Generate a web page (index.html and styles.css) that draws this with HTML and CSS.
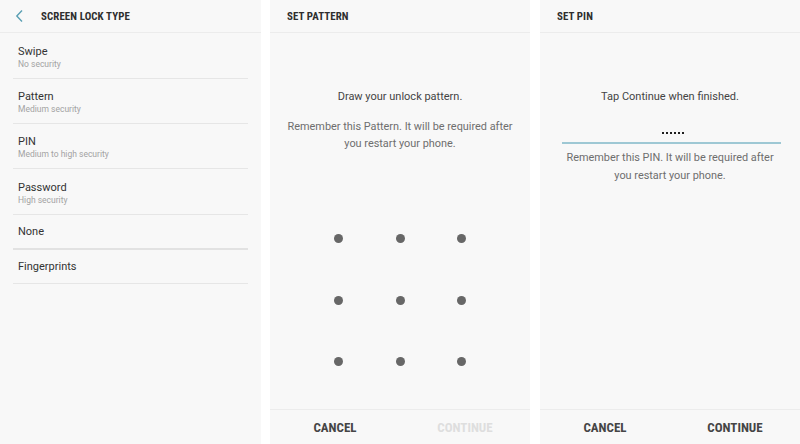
FILE: index.html
```html
<!DOCTYPE html>
<html>
<head>
<meta charset="utf-8">
<link rel="stylesheet" href="styles.css">
</head>
<body>
<div class="screens">
  <section class="panel panel-list">
    <header class="bar">
      <svg class="back" width="10" height="14" viewBox="0 0 10 14"><path d="M7 1.5 L1.8 7 L7 12.5" fill="none" stroke="#5a9fb3" stroke-width="1.4"/></svg>
      <span class="bar-title">SCREEN LOCK TYPE</span>
    </header>
    <ul class="options">
      <li class="opt two"><span class="opt-title">Swipe</span><span class="opt-sub">No security</span></li>
      <li class="opt two"><span class="opt-title">Pattern</span><span class="opt-sub">Medium security</span></li>
      <li class="opt two"><span class="opt-title">PIN</span><span class="opt-sub">Medium to high security</span></li>
      <li class="opt two tall"><span class="opt-title">Password</span><span class="opt-sub">High security</span></li>
      <li class="opt one thick"><span class="opt-title">None</span></li>
      <li class="opt one last"><span class="opt-title">Fingerprints</span></li>
    </ul>
  </section>

  <section class="panel panel-mid">
    <header class="bar pad"><span class="bar-title">SET PATTERN</span></header>
    <div class="body">
      <p class="lead">Draw your unlock pattern.</p>
      <p class="note">Remember this Pattern. It will be required after<br>you restart your phone.</p>
      <div class="dots">
        <i></i><i></i><i></i><i></i><i></i><i></i><i></i><i></i><i></i>
      </div>
    </div>
    <footer class="actions">
      <span class="btn">CANCEL</span>
      <span class="btn disabled">CONTINUE</span>
    </footer>
  </section>

  <section class="panel panel-last">
    <header class="bar pad"><span class="bar-title">SET PIN</span></header>
    <div class="body">
      <p class="lead">Tap Continue when finished.</p>
      <div class="pin"><span class="pin-dots"><b></b><b></b><b></b><b></b><b></b><b></b></span></div>
      <p class="note pin-note">Remember this PIN. It will be required after<br>you restart your phone.</p>
    </div>
    <footer class="actions">
      <span class="btn">CANCEL</span>
      <span class="btn">CONTINUE</span>
    </footer>
  </section>
</div>
</body>
</html>
```
FILE: styles.css
```css
* { box-sizing: border-box; }
html, body { margin: 0; padding: 0; background: #ffffff; }
body { font-family: Roboto, "Liberation Sans", sans-serif; color: #333; }

.screens { display: flex; height: 444px; width: 800px; }

.panel {
  background: #f8f8f8;
  height: 444px;
  display: flex;
  flex-direction: column;
}
.panel-list { width: 261px; }
.panel-mid { width: 260px; margin-left: 9px; }
.panel-last { width: 260px; margin-left: 10px; }

.bar {
  height: 33px;
  border-bottom: 1px solid #ececec;
  display: flex;
  align-items: center;
  padding-left: 13px;
  flex-shrink: 0;
}
.bar.pad { padding-left: 17px; }
.back { margin-left: 2px; margin-right: 16px; }
.bar-title {
  font-weight: 700;
  font-size: 10.9px;
  font-stretch: 80%;
  color: #2e2e2e;
  letter-spacing: 0.1px;
}

.options { list-style: none; margin: 0 13px; padding: 1px 0 0; }
.opt {
  display: flex;
  flex-direction: column;
  justify-content: center;
  padding-left: 5px;
  border-bottom: 1px solid #e6e6e6;
}
.opt.two { height: 45px; padding-top: 3px; }
.opt.tall { height: 46px; }
.opt.one { height: 35px; padding-top: 1px; }
.opt.last { height: 34px; }
.opt.thick { border-bottom: 2px solid #e2e2e2; }
.opt-title { font-size: 11px; line-height: 14px; color: #333; }
.opt-sub { font-size: 8.5px; line-height: 11px; color: #a3a3a3; }

.body { flex: 1; text-align: center; }
.lead { margin: 55px 0 0; font-size: 11px; line-height: 17px; color: #444; }
.note { margin: 13px 0 0; font-size: 10.9px; line-height: 17px; color: #6e6e6e; }

.dots {
  display: grid;
  grid-template-columns: repeat(3, 9px);
  grid-auto-rows: 9px;
  column-gap: 52.5px;
  row-gap: 52.5px;
  justify-content: center;
  margin-top: 82px;
}
.dots i { display: block; width: 9px; height: 9px; border-radius: 50%; background: #676767; }

.pin {
  margin: 19px 19px 0 22px;
  height: 20px;
  border-bottom: 2px solid #9ec8d4;
  display: flex;
  justify-content: center;
  align-items: center;
}
.pin-dots { display: flex; gap: 2px; margin-left: 2px; margin-top: -1px; }
.pin-dots b { display: block; width: 2px; height: 2px; background: #1e1e1e; }
.pin-note { margin-top: 5px; line-height: 18px; }

.actions {
  height: 35px;
  border-top: 1px solid #ececec;
  display: flex;
  flex-shrink: 0;
}
.btn {
  flex: 1;
  display: flex;
  align-items: center;
  justify-content: center;
  font-weight: 700;
  font-size: 13px;
  font-stretch: 80%;
  color: #454545;
}
.btn.disabled { color: #dedede; }
```
